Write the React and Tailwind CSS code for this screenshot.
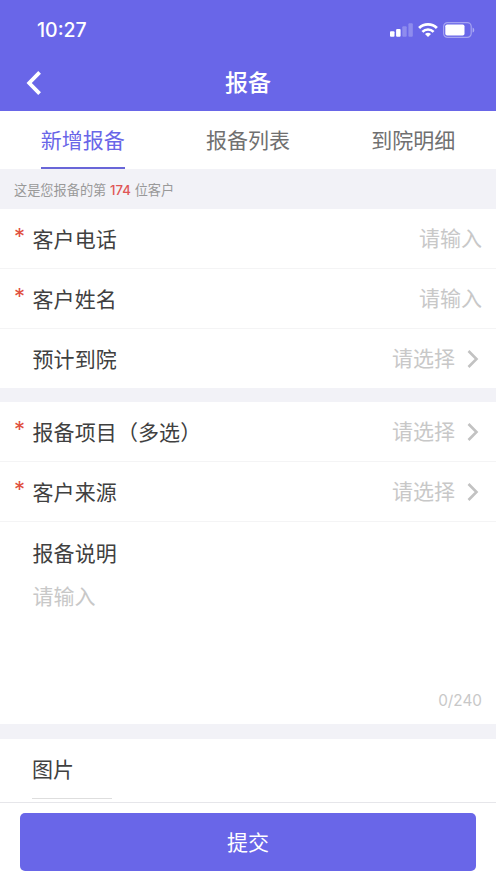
const TABS = ["新增报备", "报备列表", "到院明细"];

function StatusBar() {
    return (
        <div className="flex h-[55px] items-center justify-between pt-[5px] pr-[21px] pl-[37px]">
            <span className="pt-[2px] text-[19.5px] leading-none font-medium">10:27</span>
            <div className="flex items-center">
                <svg width="23" height="14" viewBox="0 0 23 14" fill="currentColor">
                    <rect x="0" y="8.3" width="4.5" height="5.4" rx="1" />
                    <rect x="6.1" y="5.9" width="4.5" height="7.8" rx="1" />
                    <rect x="12.3" y="3.2" width="4.4" height="10.5" rx="1" opacity="0.25" />
                    <rect x="18.4" y="0.2" width="4.4" height="13.5" rx="1" opacity="0.25" />
                </svg>
                <svg className="ml-[5px]" width="20" height="14" viewBox="0 0 20 14" fill="none" stroke="currentColor">
                    <path d="M1.1 5.1a12.7 12.7 0 0 1 17.8 0" strokeWidth="2.8" />
                    <path d="M4.4 8.8a7.9 7.9 0 0 1 11.2 0" strokeWidth="2.6" />
                    <path d="M10 14 7 11.1a4.4 4.4 0 0 1 6 0Z" fill="currentColor" stroke="none" />
                </svg>
                <svg className="ml-[5px]" width="32" height="16" viewBox="0 0 32 16" fill="none">
                    <rect x="0.6" y="0.6" width="27.6" height="14.8" rx="4" stroke="currentColor" strokeWidth="1.2" opacity="0.4" />
                    <rect x="2.3" y="2.4" width="19.2" height="11.2" rx="1.8" fill="currentColor" />
                    <path d="M29.6 5.4c2.2.8 2.2 4.4 0 5.2Z" fill="currentColor" opacity="0.45" />
                </svg>
            </div>
        </div>
    );
}

function Header() {
    return (
        <header className="h-[111px] bg-[#6966e8] text-white">
            <StatusBar />
            <div className="grid h-14 grid-cols-3 items-center">
                <svg className="ml-[26px]" width="16" height="24" viewBox="0 0 16 24" fill="none" stroke="currentColor" strokeWidth="3.8">
                    <path d="M13.6 1.4 3.2 12l10.4 10.6" />
                </svg>
                <h1 className="text-center text-[23px] leading-none font-medium">报备</h1>
            </div>
        </header>
    );
}

function Tabs() {
    return (
        <nav className="grid h-[58px] grid-cols-3 text-[21px]">
            {TABS.map((tab, i) => (
                <div key={tab} className="flex justify-center">
                    <span
                        className={
                            i === 0
                                ? "border-b-2 border-[#6966d8] pt-[14px] leading-8 text-[#6966e8]"
                                : "pt-[14px] leading-8 text-[#707070]"
                        }
                    >
                        {tab}
                    </span>
                </div>
            ))}
        </nav>
    );
}

function Field({ label, required, select, last }) {
    return (
        <div
            className={
                last
                    ? "flex h-[59px] items-center pt-px pr-[14px] pl-[14px]"
                    : "flex h-[60px] items-center border-b border-[#f4f4f5] pt-px pr-[14px] pl-[14px]"
            }
        >
            <span className="w-[18.5px] pb-[7px] text-[22px] leading-none text-[#e0503f]">{required && "*"}</span>
            <span className="pt-px text-[21px] tracking-[0.1px] text-[#404040]">{label}</span>
            <span className="ml-auto text-[21px] text-[#c8c8c8]">{select ? "请选择" : "请输入"}</span>
            {select && (
                <svg className="mr-[3px] ml-3" width="12" height="20" viewBox="0 0 12 20" fill="none" stroke="#c2c2c2" strokeWidth="2.6">
                    <path d="M1.5 2 9.5 10l-8 8" />
                </svg>
            )}
        </div>
    );
}

export default function App() {
    return (
        <div className="flex h-[882px] w-[496px] flex-col overflow-hidden bg-white font-['Inter','Noto_Sans_CJK_SC',sans-serif]">
            <Header />
            <Tabs />
            <p className="h-10 bg-[#f2f2f7] pt-px pl-[14px] text-[13.2px] leading-10 text-[#999]">
                这是您报备的第 <span className="font-medium text-[#e05656]">174</span> 位客户
            </p>

            <section>
                <Field label="客户电话" required />
                <Field label="客户姓名" required />
                <Field label="预计到院" select last />
            </section>

            <section className="border-t-14 border-[#f2f2f7]">
                <Field label="报备项目（多选）" required select />
                <Field label="客户来源" required select />
                <div className="flex h-[202px] flex-col pt-4 pr-[14px] pl-[32.5px] text-[21px] leading-8">
                    <span className="tracking-[0.1px] text-[#404040]">报备说明</span>
                    <span className="mt-[11px] text-[#c8c8c8]">请输入</span>
                    <span className="mt-auto self-end pb-[11px] text-[15.3px] leading-6 text-[#c8c8c8]">0/240</span>
                </div>
            </section>

            <section className="h-[78px] border-t-15 border-[#f2f2f7] pt-[15px] pl-8">
                <h2 className="text-[21px] leading-8 text-[#404040]">图片</h2>
                <div className="mt-3 h-1 w-20 border-t border-[#dedede]" />
            </section>

            <footer className="h-20 border-t border-[#e6e6ea] px-5 pt-[10px]">
                <button className="h-[58px] w-full rounded-[5px] bg-[#6966e8] pt-[2px] text-[21px] text-white">提交</button>
            </footer>
        </div>
    );
}
